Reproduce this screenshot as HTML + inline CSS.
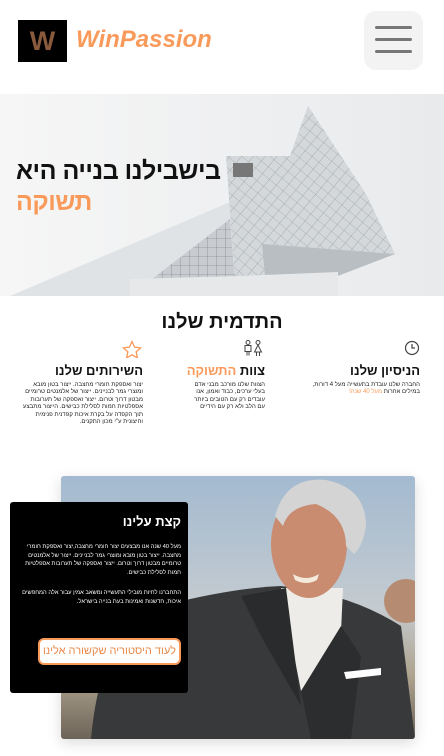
<!DOCTYPE html>
<html><head><meta charset="utf-8"><style>
*{margin:0;padding:0;box-sizing:border-box}
body{width:444px;height:756px;overflow:hidden;background:#fff;font-family:"Liberation Sans","Noto Sans CJK SC",sans-serif;position:relative}
.a{position:absolute}
.rtl{direction:rtl;text-align:right}
.or{color:#f99a5a}
.col{position:absolute;top:340px;direction:rtl;text-align:right}
.col h3{font-size:13px;font-weight:bold;color:#111;margin-top:2px;white-space:nowrap}
.col p{font-size:6px;line-height:7.4px;color:#222;margin-top:4px}
</style></head><body>
<div class="a" style="left:18px;top:20px;width:49px;height:42px;background:#000"></div>
<div class="a" style="left:18px;top:26px;width:49px;text-align:center;font-size:27px;font-weight:bold;color:#8a5a3c">W</div>
<div class="a" style="left:76px;top:26px;font-size:24px;font-weight:bold;font-style:italic;color:#f99a5a">WinPassion</div>
<div class="a" style="left:364px;top:11px;width:59px;height:59px;background:#f3f3f3;border-radius:12px"></div>
<div class="a" style="left:375px;top:26px;width:37px;height:3px;background:#777;border-radius:2px"></div>
<div class="a" style="left:375px;top:38px;width:37px;height:3px;background:#777;border-radius:2px"></div>
<div class="a" style="left:375px;top:50px;width:37px;height:3px;background:#777;border-radius:2px"></div>

<svg class="a" style="left:0;top:94px" width="444" height="202">
<defs>
<linearGradient id="sk" x1="0" y1="0" x2="1" y2="0"><stop offset="0" stop-color="#f6f6f6"/><stop offset="1" stop-color="#e8eaec"/></linearGradient>
<pattern id="g" width="9" height="9" patternUnits="userSpaceOnUse" patternTransform="rotate(40)"><rect width="9" height="9" fill="#d4d8db"/><path d="M0 0H9M0 0V9" stroke="#8a9094" stroke-width=".6"/></pattern>
<pattern id="g2" width="9" height="9" patternUnits="userSpaceOnUse"><rect width="9" height="9" fill="#c8ccd0"/><path d="M0 0H9M0 0V9" stroke="#6f767a" stroke-width=".6"/></pattern>
</defs>
<rect width="444" height="202" fill="url(#sk)"/>
<polygon points="10,202 230,108 236,202" fill="#e0e3e5"/>
<polygon points="130,202 230,125 236,202" fill="url(#g2)"/>
<polygon points="226,62 290,62 300,202 236,202" fill="url(#g)"/>
<polygon points="290,62 308,12 366,100 395,160 300,154 262,150 236,80" fill="url(#g)"/>
<polygon points="262,150 395,160 330,185 265,182" fill="#b9bec2"/>
<rect x="233" y="69" width="20" height="14" fill="#777"/>
<polygon points="130,202 338,202 338,178 240,182 130,185" fill="#e6e8ea"/>
</svg>
<div class="a" style="left:16px;top:156px;width:210px;direction:rtl;text-align:left;font-size:25px;line-height:31px;color:#111;font-weight:bold;letter-spacing:-.5px;white-space:nowrap">בישבילנו בנייה היא<br><span class="or">תשוקה</span></div>

<div class="a rtl" style="left:0;width:444px;top:311px;text-align:center;font-size:20px;font-weight:bold;color:#111">התדמית שלנו</div>

<div class="col" style="right:24px;width:118px">
<svg width="16" height="16"><circle cx="8" cy="8" r="6.5" fill="none" stroke="#444" stroke-width="1.2"/><path d="M8 4v4h3" fill="none" stroke="#444" stroke-width="1.2"/></svg>
<h3>הניסיון שלנו</h3>
<p>החברה שלנו עובדת בתעשייה מעל 4 דורות, במילים אחרות <span class="or">מעל 40 שנה!</span></p></div>
<div class="col" style="right:179px;width:78px">
<svg width="22" height="16"><circle cx="5" cy="2.5" r="2" fill="none" stroke="#444"/><rect x="2" y="5.5" width="6" height="6" fill="none" stroke="#444"/><path d="M4 11.5v4M6 11.5v4" stroke="#444"/><circle cx="15" cy="2.5" r="2" fill="none" stroke="#444"/><path d="M15 5 L11.5 12 H18.5 Z M13.5 12v4M16.5 12v4" fill="none" stroke="#444"/></svg>
<h3>צוות <span class="or">התשוקה</span></h3>
<p>הצוות שלנו מורכב מבני אדם בעלי ערכים, כבוד ואמון, אנו עובדים רק עם הטובים ביותר עם הלב ולא רק עם הידיים</p></div>
<div class="col" style="right:301px;width:126px">
<svg width="22" height="18"><path d="M11 1.5l2.6 5.6 6 .7-4.5 4.1 1.3 6-5.4-3.1-5.4 3.1 1.3-6-4.5-4.1 6-.7z" fill="none" stroke="#f99a5a" stroke-width="1.3"/></svg>
<h3 style="margin-top:0">השירותים שלנו</h3>
<p>יצור ואספקת חומרי מחצבה. ייצור בטון מובא ומוצרי גמר לבניינים. ייצור של אלמנטים טרומיים מבטון דרוך וטרום. ייצור ואספקה של תערובות אספלטיות חמות לסלילת כבישים. הייצור מתבצע תוך הקפדה על בקרת איכות קפדנית פנימית וחיצונית ע"י מכון התקנים.</p></div>

<svg class="a" style="left:61px;top:476px;border-radius:3px;box-shadow:0 4px 14px rgba(0,0,0,.15)" width="354" height="263">
<defs><linearGradient id="bg" x1="0" y1="0" x2="0" y2="1"><stop offset="0" stop-color="#a3bad0"/><stop offset=".5" stop-color="#c4cbd0"/><stop offset=".75" stop-color="#b0a590"/><stop offset="1" stop-color="#6d6458"/></linearGradient></defs>
<rect width="354" height="263" fill="url(#bg)"/>
<ellipse cx="345" cy="125" rx="22" ry="22" fill="#b58c72"/>
<path d="M30 263 Q40 150 100 130 Q170 112 220 110 Q290 118 340 150 L354 263Z" fill="#38393b"/>
<path d="M220 112 L282 112 L278 200 L240 215Z" fill="#eeece8"/>
<path d="M240 215 L280 150 L300 180 L290 263 L250 263Z" fill="#2c2d2e"/>
<path d="M180 120 L225 112 L240 230 L200 160Z" fill="#2a2b2c"/>
<path d="M283 196 L320 192 L320 199 L285 203Z" fill="#fff"/>
<ellipse cx="248" cy="68" rx="38" ry="54" fill="#c98c70"/>
<path d="M214 40 Q225 0 265 4 Q305 12 305 50 Q302 70 293 78 L285 70 Q285 40 255 28 Q228 30 222 50Z" fill="#d4d4d4"/>
<path d="M232 98 Q245 106 258 98 L256 104 Q245 110 234 104Z" fill="#f3eadc"/>
</svg>

<div class="a" style="left:10px;top:502px;width:178px;height:191px;background:#000;border-radius:3px"></div>
<div class="a rtl" style="left:17px;top:514px;width:164px;color:#fff">
<div style="font-size:13px;font-weight:bold">קצת עלינו</div>
<p style="font-size:5.8px;line-height:8.5px;margin-top:14px">מעל 40 שנה אנו מבצעים יצור חומרי מחצבה,יצור ואספקת חומרי מחצבה. ייצור בטון מובא ומוצרי גמר לבניינים. ייצור של אלמנטים טרומיים מבטון דרוך וטרום. ייצור ואספקה של תערובות אספלטיות חמות לסלילת כבישים.</p>
<p style="font-size:5.8px;line-height:8.5px;margin-top:12px">התחברנו לחיות מובילי התעשייה ומשאב אמין עבור אלה המחפשים איכות, חדשנות ואמינות בעת בנייה בישראל.</p></div>
<div class="a" style="left:38px;top:638px;width:143px;height:27px;border:2px solid #f99a5a;border-radius:6px;background:#fff;color:#e88a4a;font-size:11px;text-align:center;line-height:23px;direction:rtl">לעוד היסטוריה שקשורה אלינו</div>
</body></html>
